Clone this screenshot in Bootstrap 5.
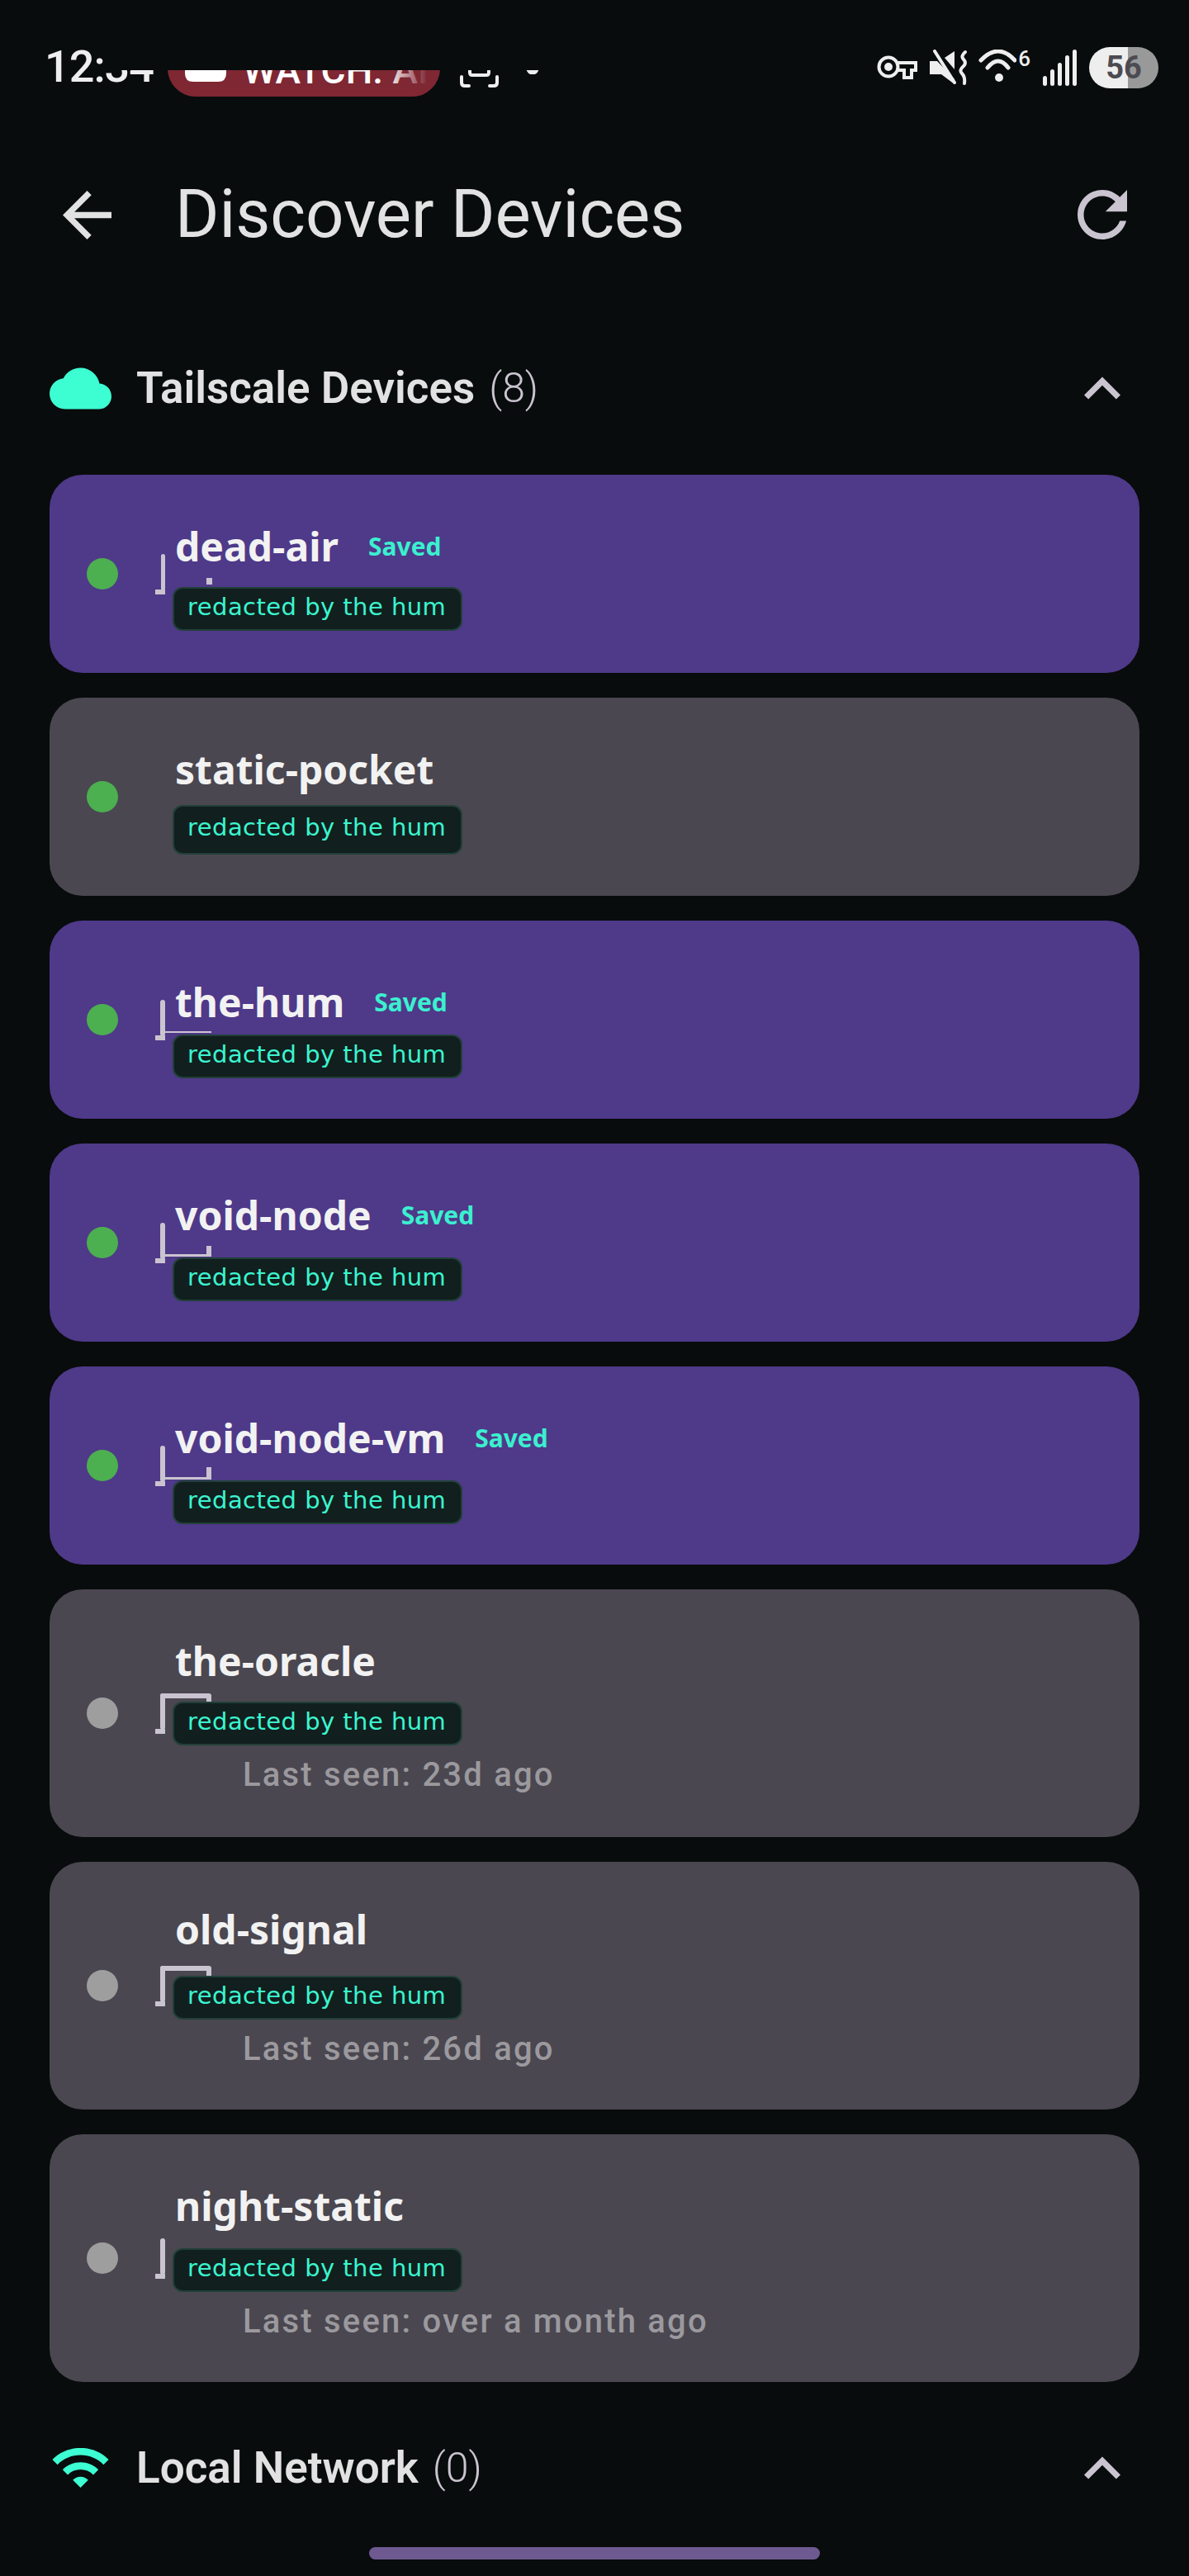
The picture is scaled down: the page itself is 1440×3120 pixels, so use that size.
<!DOCTYPE html>
<html lang="en">
  <head>
    <meta charset="UTF-8" />
    <meta name="viewport" content="width=device-width, initial-scale=1.0" />
    <title>Discover Devices</title>
    <link href="https://cdn.jsdelivr.net/npm/bootstrap@5.3.0/dist/css/bootstrap.min.css" rel="stylesheet" />
    <style>
      body { background: #080c0c; margin: 0; font-family: Roboto, sans-serif; }
      .phone { width: 1440px; height: 3120px; overflow: hidden; background: #080c0c; }

      /* status bar */
      .status-row { height: 200px; color: #eee; }
      .status-time { font-size: 54px; font-weight: 500; line-height: 1; margin: 54px 0 0 54px; width: 149px; letter-spacing: -1px; }
      .status-pill { width: 330px; height: 117px; margin-top: 0; background: #7f2733; border-radius: 0 0 34px 34px; padding: 62px 0 0 21px; color: #fff; font-size: 46px; font-weight: 500; line-height: 1; white-space: nowrap; overflow: hidden; }
      .pill-fade { top: 0; left: 265px; width: 50px; height: 100%; background: linear-gradient(90deg, rgba(127, 39, 51, 0), #7f2733); }
      .status-mask { top: 0; left: 127px; width: 560px; height: 85px; background: #080c0c; }
      .status-shot { margin: 60px 0 0 24px; }
      .status-dot { margin: 70px 0 0 33px; }
      .status-right { margin: 57px 37px 0 auto; }
      .stat-mute { margin: 3px 0 0 15px; }
      .stat-wifi { margin: 3px 0 0 13px; }
      .stat-bars { margin-top: 3px; }
      .wifi-six { font-size: 26px; font-weight: 500; line-height: 1; margin: 0 15px 0 2px; padding-top: 1px; }
      .batt { width: 84px; height: 50px; border-radius: 25px; background: linear-gradient(90deg, #eee 56%, #999 56%); color: #4c4b52; font-size: 38px; font-weight: 700; line-height: 50px; text-align: center; margin-left: 13px; }

      /* app bar */
      .app-head { height: 120px; padding: 0 75px 0 76px; }
      .app-title { color: #e2e2e2; font-size: 81.5px; font-weight: 400; line-height: 1; margin: 0 0 0 77px; }

      /* section headers */
      .sec-row { height: 80px; margin-top: 110px; padding: 0 83px 0 60px; }
      .sec-row-low { margin-top: 64px; }
      .sec-ico { width: 75px; flex: none; }
      .sec-title { color: #e2e2e2; font-size: 53px; font-weight: 600; line-height: 1; margin-left: 30px; }
      .sec-count { color: #cac4d0; font-size: 50px; font-weight: 300; line-height: 1; margin-left: 17px; }

      /* device cards */
      .dev-list { margin: 65px 60px 0; gap: 30px; }
      .dev-box { height: 240px; border-radius: 40px; background: #4a4750; }
      .dev-box-old { height: 300px; }
      .dev-box-saved { background: #4f3989; }
      .dev-dot { width: 38px; height: 38px; border-radius: 50%; background: #4caf50; flex: none; margin: 0 0 0 45px; }
      .dev-dot-off { background: #9e9e9e; }
      .dev-ghost { left: 128px; top: 96px; }
      .dev-box-old .dev-ghost { top: 126px; }
      .dev-text { margin-left: 66px; z-index: 1; }
      .dev-head { height: 138px; padding: 55px 0 0 3px; box-sizing: border-box; }
      .head-low { padding-top: 67px; }
      .head-high { padding-top: 50px; }
      .head-tight { height: 136px; }
      .head-short { height: 130px; }
      .dev-name { color: #f2f2f2; font-family: "Noto Sans", sans-serif; font-size: 48px; font-weight: 700; line-height: 64px; }
      .dev-saved { color: #3bf0cf; font-family: "Noto Sans", sans-serif; font-size: 30px; font-weight: 700; line-height: 64px; margin-left: 36px; }
      .dev-chip { width: 351px; height: 53px; background: #111f1e; border: 2px solid #214038; border-radius: 12px; color: #3bf5cf; font-family: "DejaVu Sans", sans-serif; font-size: 29px; letter-spacing: .45px; line-height: 44px; padding-left: 16px; white-space: nowrap; }
      .chip-tall { height: 60px; line-height: 50px; }
      .dev-seen { color: #9b999e; font-size: 40px; font-weight: 500; line-height: 1; letter-spacing: 2.2px; margin: 16px 0 0 85px; white-space: nowrap; }

      .home-bar { width: 546px; height: 15px; margin: 56px auto 0; background: #6e5a91; border-radius: 8px; }
    </style>
  </head>
  <body>
    <div class="phone position-relative">
      <!-- status bar, the notification strip is cut off at y=85 in the screenshot -->
      <div class="status-row d-flex align-items-start position-relative">
        <div class="status-time">12:34</div>
        <div class="status-pill position-relative d-flex align-items-start">
          <svg width="50" height="37" viewBox="0 0 50 37" class="flex-none me-3"><path fill="#fff" d="M0 0h50v27q0 10-10 10H10Q0 37 0 27z"/><path fill="#7f2733" d="M20 0h12L20 12z"/></svg>
          <span class="ms-1">WATCH. AI</span>
          <div class="pill-fade position-absolute"></div>
        </div>
        <svg class="status-shot" width="47" height="46" viewBox="0 0 47 46" fill="none" stroke="#eee" stroke-width="4" stroke-linecap="round"><path d="M2 33v7q0 4 4 4h5M45 33v7q0 4-4 4h-5M12 20v8q0 3 3 3h17q3 0 3-3v-8"/></svg>
        <svg class="status-dot" width="16" height="20" viewBox="0 0 16 20"><circle cx="8" cy="13" r="7.5" fill="#eee"/></svg>
        <div class="status-mask position-absolute"></div>
        <div class="status-right d-flex align-items-start">
          <svg class="mt-2" width="49" height="32" viewBox="0 0 49 32" fill="none" stroke="#eee" stroke-width="4"><circle cx="14" cy="16" r="11.500"/><circle cx="14" cy="16" r="5" fill="#eee" stroke="none"/><path d="M25 11h22v9h-5v9h-9v-9h-8"/></svg>
          <svg class="stat-mute" width="46" height="44" viewBox="0 0 46 44"><path fill="#eee" d="M0 14h9L30 36v6L14 30H0zM18 10 30 2v22z"/><path fill="none" stroke="#eee" stroke-width="4" stroke-linecap="round" d="M6 2l24 38M43 3q-6 5-2 9t0 8q-6 5-2 9t3 12"/></svg>
          <svg class="stat-wifi" width="46" height="40" viewBox="0 0 46 40" fill="none" stroke="#eee" stroke-width="5" stroke-linecap="round"><path d="M3 13Q24-9 44 13M11 22q13-16 25 0"/><circle cx="25" cy="34" r="5" fill="#eee" stroke="none"/></svg>
          <span class="wifi-six">6</span>
          <svg class="stat-bars" width="43" height="46" viewBox="0 0 43 46" fill="#eee"><rect x="0" y="32" width="5" height="12" rx="2.500"/><rect x="9" y="24" width="5" height="20" rx="2.500"/><rect x="18" y="16" width="5" height="28" rx="2.500"/><rect x="27" y="7" width="5" height="37" rx="2.500"/><rect x="36" y="0" width="5" height="44" rx="2.500"/></svg>
          <div class="batt">56</div>
        </div>
      </div>

      <div class="app-head d-flex align-items-center">
        <svg width="59" height="59" viewBox="4 4 16 16" fill="#e2e2e2"><path d="M20 11H7.830l5.590-5.590L12 4l-8 8 8 8 1.410-1.410L7.830 13H20v-2z"/></svg>
        <h1 class="app-title">Discover Devices</h1>
        <svg class="ms-auto" width="60" height="60" viewBox="4 4 16 16" fill="#cac4d0"><path d="M17.650 6.350C16.200 4.900 14.210 4 12 4c-4.420 0-7.990 3.580-7.990 8s3.570 8 7.990 8c3.730 0 6.840-2.550 7.730-6h-2.080c-.82 2.330-3.040 4-5.650 4-3.310 0-6-2.690-6-6s2.690-6 6-6c1.660 0 3.140.69 4.220 1.780L13 11h7V4l-2.350 2.350z"/></svg>
      </div>

      <div class="sec-row d-flex align-items-center">
        <svg class="sec-ico" height="51" viewBox="0 4 24 16" fill="#3dfdd2"><path d="M19.350 10.040C18.670 6.590 15.640 4 12 4 9.110 4 6.600 5.640 5.350 8.040 2.340 8.360 0 10.910 0 14c0 3.310 2.690 6 6 6h13c2.760 0 5-2.240 5-5 0-2.640-2.050-4.780-4.650-4.960z"/></svg>
        <span class="sec-title">Tailscale Devices</span>
        <span class="sec-count">(8)</span>
        <svg class="ms-auto" width="44" height="28" viewBox="6 8 12 7.410" fill="#cac4d0"><path d="M12 8l-6 6 1.410 1.410L12 10.830l4.590 4.580L18 14z"/></svg>
      </div>

      <div class="dev-list d-flex flex-column">
        <div class="dev-box dev-box-saved d-flex position-relative">
          <div class="dev-dot align-self-center"></div>
          <svg class="dev-ghost position-absolute" width="70" height="50" viewBox="0 0 70 50" fill="#cac4d0"><rect x="7" width="5" height="44" rx="2.500"/><rect y="43" width="12" height="6"/><rect x="62" y="29" width="7" height="8"/></svg>
          <div class="dev-text">
            <div class="dev-head head-tight d-flex align-items-start"><span class="dev-name">dead-air</span><span class="dev-saved">Saved</span></div>
            <div class="dev-chip">redacted by the hum</div>
          </div>
        </div>

        <div class="dev-box d-flex position-relative">
          <div class="dev-dot align-self-center"></div>
          <div class="dev-text">
            <div class="dev-head head-short d-flex align-items-start"><span class="dev-name">static-pocket</span></div>
            <div class="dev-chip chip-tall">redacted by the hum</div>
          </div>
        </div>

        <div class="dev-box dev-box-saved d-flex position-relative">
          <div class="dev-dot align-self-center"></div>
          <svg class="dev-ghost position-absolute" width="70" height="50" viewBox="0 0 70 50" fill="#cac4d0"><rect x="6" width="6" height="44" rx="3"/><rect y="43" width="12" height="6"/><rect x="12" y="38" width="56" height="2"/></svg>
          <div class="dev-text">
            <div class="dev-head head-low d-flex align-items-start"><span class="dev-name">the-hum</span><span class="dev-saved">Saved</span></div>
            <div class="dev-chip">redacted by the hum</div>
          </div>
        </div>

        <div class="dev-box dev-box-saved d-flex position-relative">
          <div class="dev-dot align-self-center"></div>
          <svg class="dev-ghost position-absolute" width="70" height="50" viewBox="0 0 70 50" fill="#cac4d0"><rect x="6" width="6" height="44" rx="3"/><rect y="43" width="12" height="6"/><rect x="12" y="38" width="56" height="3"/><rect x="62" y="28" width="6" height="13"/></svg>
          <div class="dev-text">
            <div class="dev-head d-flex align-items-start"><span class="dev-name">void-node</span><span class="dev-saved">Saved</span></div>
            <div class="dev-chip">redacted by the hum</div>
          </div>
        </div>

        <div class="dev-box dev-box-saved d-flex position-relative">
          <div class="dev-dot align-self-center"></div>
          <svg class="dev-ghost position-absolute" width="70" height="50" viewBox="0 0 70 50" fill="#cac4d0"><rect x="6" width="6" height="44" rx="3"/><rect y="43" width="12" height="6"/><rect x="12" y="38" width="56" height="3"/><rect x="62" y="26" width="6" height="15"/></svg>
          <div class="dev-text">
            <div class="dev-head d-flex align-items-start"><span class="dev-name">void-node-vm</span><span class="dev-saved">Saved</span></div>
            <div class="dev-chip">redacted by the hum</div>
          </div>
        </div>

        <div class="dev-box dev-box-old d-flex position-relative">
          <div class="dev-dot dev-dot-off align-self-center"></div>
          <svg class="dev-ghost position-absolute" width="70" height="50" viewBox="0 0 70 50" fill="#cac4d0"><rect x="6" width="6" height="44" rx="3"/><rect y="43" width="12" height="6"/><rect x="6" width="62" height="6" rx="3"/><rect x="62" y="2" width="6" height="12"/></svg>
          <div class="dev-text">
            <div class="dev-head head-tight d-flex align-items-start"><span class="dev-name">the-oracle</span></div>
            <div class="dev-chip">redacted by the hum</div>
            <div class="dev-seen">Last seen: 23d ago</div>
          </div>
        </div>

        <div class="dev-box dev-box-old d-flex position-relative">
          <div class="dev-dot dev-dot-off align-self-center"></div>
          <svg class="dev-ghost position-absolute" width="70" height="50" viewBox="0 0 70 50" fill="#cac4d0"><rect x="6" width="6" height="44" rx="3"/><rect y="43" width="12" height="6"/><rect x="6" width="62" height="6" rx="3"/><rect x="62" y="2" width="6" height="12"/></svg>
          <div class="dev-text">
            <div class="dev-head head-high d-flex align-items-start"><span class="dev-name">old-signal</span></div>
            <div class="dev-chip">redacted by the hum</div>
            <div class="dev-seen">Last seen: 26d ago</div>
          </div>
        </div>

        <div class="dev-box dev-box-old d-flex position-relative">
          <div class="dev-dot dev-dot-off align-self-center"></div>
          <svg class="dev-ghost position-absolute" width="70" height="50" viewBox="0 0 70 50" fill="#cac4d0"><rect x="6" width="6" height="44" rx="3"/><rect y="43" width="12" height="6"/></svg>
          <div class="dev-text">
            <div class="dev-head d-flex align-items-start"><span class="dev-name">night-static</span></div>
            <div class="dev-chip">redacted by the hum</div>
            <div class="dev-seen">Last seen: over a month ago</div>
          </div>
        </div>
      </div>

      <div class="sec-row sec-row-low d-flex align-items-center">
        <svg class="sec-ico" height="48" viewBox="1 4.500 22 15.500" fill="#3dfdd2"><path d="M1 9l2 2c4.970-4.970 13.030-4.970 18 0l2-2C16.930 2.930 7.080 2.930 1 9zm8 8l3 3 3-3c-1.650-1.660-4.340-1.660-6 0zm-4-4l2 2c2.760-2.760 7.240-2.760 10 0l2-2C15.140 9.140 8.870 9.140 5 13z"/></svg>
        <span class="sec-title">Local Network</span>
        <span class="sec-count">(0)</span>
        <svg class="ms-auto" width="44" height="28" viewBox="6 8 12 7.410" fill="#cac4d0"><path d="M12 8l-6 6 1.410 1.410L12 10.830l4.590 4.580L18 14z"/></svg>
      </div>

      <div class="home-bar"></div>
    </div>
    <script src="https://cdn.jsdelivr.net/npm/bootstrap@5.3.0/dist/js/bootstrap.bundle.min.js"></script>
  </body>
</html>
